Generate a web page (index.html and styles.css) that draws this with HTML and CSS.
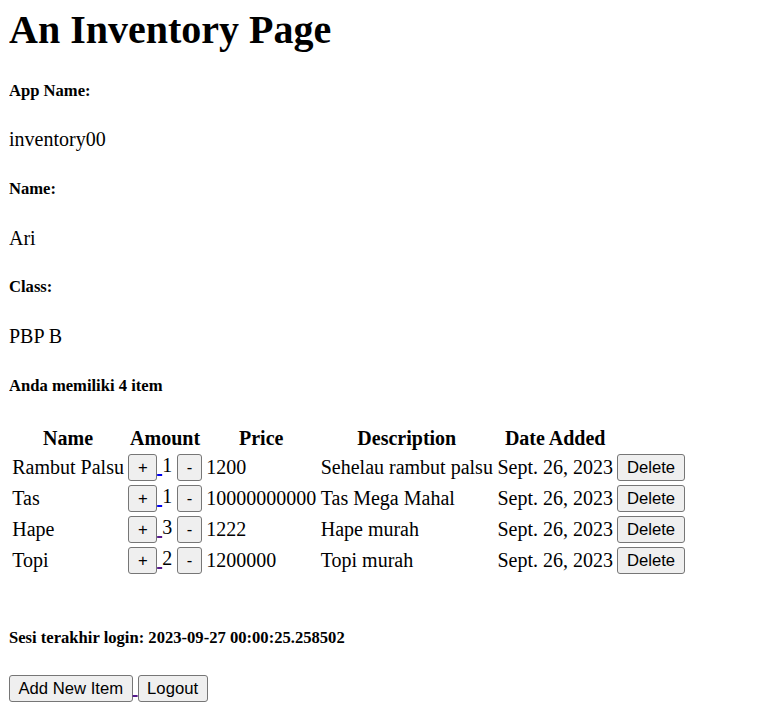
FILE: index.html
```html
<!DOCTYPE html>
<html>
<head>
<meta charset="utf-8">
<title>Inventory</title>
<link rel="stylesheet" href="styles.css">
</head>
<body>
<h1 class="title">An Inventory Page</h1>
<h5 class="label">App Name:</h5>
<p class="value">inventory00</p>
<h5 class="label">Name:</h5>
<p class="value">Ari</p>
<h5 class="label">Class:</h5>
<p class="value">PBP B</p>
<h5 class="label">Anda memiliki 4 item</h5>
<table class="items">
<tr><th>Name</th><th>Amount</th><th>Price</th><th>Description</th><th>Date Added</th><th></th></tr>
<tr><td>Rambut Palsu</td><td><a class="link" href="#"><button class="btn">+</button> </a>1 <a class="link" href="#"><button class="btn">-</button></a></td><td>1200</td><td>Sehelau rambut palsu</td><td>Sept. 26, 2023</td><td><a class="link" href="#"><button class="btn">Delete</button></a></td></tr>
<tr><td>Tas</td><td><a class="link" href="#"><button class="btn">+</button> </a>1 <a class="link" href="#"><button class="btn">-</button></a></td><td>10000000000</td><td>Tas Mega Mahal</td><td>Sept. 26, 2023</td><td><a class="link" href="#"><button class="btn">Delete</button></a></td></tr>
<tr><td>Hape</td><td><a class="link visited" href="#"><button class="btn">+</button> </a>3 <a class="link visited" href="#"><button class="btn">-</button></a></td><td>1222</td><td>Hape murah</td><td>Sept. 26, 2023</td><td><a class="link visited" href="#"><button class="btn">Delete</button></a></td></tr>
<tr><td>Topi</td><td><a class="link visited" href="#"><button class="btn">+</button> </a>2 <a class="link visited" href="#"><button class="btn">-</button></a></td><td>1200000</td><td>Topi murah</td><td>Sept. 26, 2023</td><td><a class="link visited" href="#"><button class="btn">Delete</button></a></td></tr>
</table>
<br>
<h5 class="label">Sesi terakhir login: 2023-09-27 00:00:25.258502</h5>
<a class="link visited" href="#"><button class="btn">Add New Item</button> </a><a class="link visited" href="#"><button class="btn">Logout</button></a>
</body>
</html>
```
FILE: styles.css
```css
html {
  background: #fff;
}
body {
  margin: 7px 10px 10px 9px;
  font-family: "Liberation Serif", "Times New Roman", serif;
  font-size: 20px;
  color: #000;
}
.title {
  font-size: 40px;
  font-weight: bold;
  margin: 0 0 26.8px;
  line-height: 46px;
}
.label {
  font-size: 16.6px;
  font-weight: bold;
  margin: 27.7px 0;
}
.value {
  margin: 20px 0;
}
.items {
  border-spacing: 2.5px;
  font-size: 20px;
}
.items th,
.items td {
  padding: 1.25px;
  white-space: nowrap;
}
.items th {
  font-weight: bold;
  text-align: center;
}
.items td {
  text-align: left;
}
.link {
  color: #0000ee;
  text-decoration: underline;
}
.link.visited {
  color: #551a8b;
}
.btn {
  font-family: "Liberation Sans", Arial, sans-serif;
  font-size: 16.67px;
  line-height: 20px;
  height: 26.5px;
  color: #000;
  background: #efefef;
  border: 1px solid #767676;
  border-radius: 3px;
  padding: 2px 8.5px;
  margin: 0;
  vertical-align: baseline;
}
```
